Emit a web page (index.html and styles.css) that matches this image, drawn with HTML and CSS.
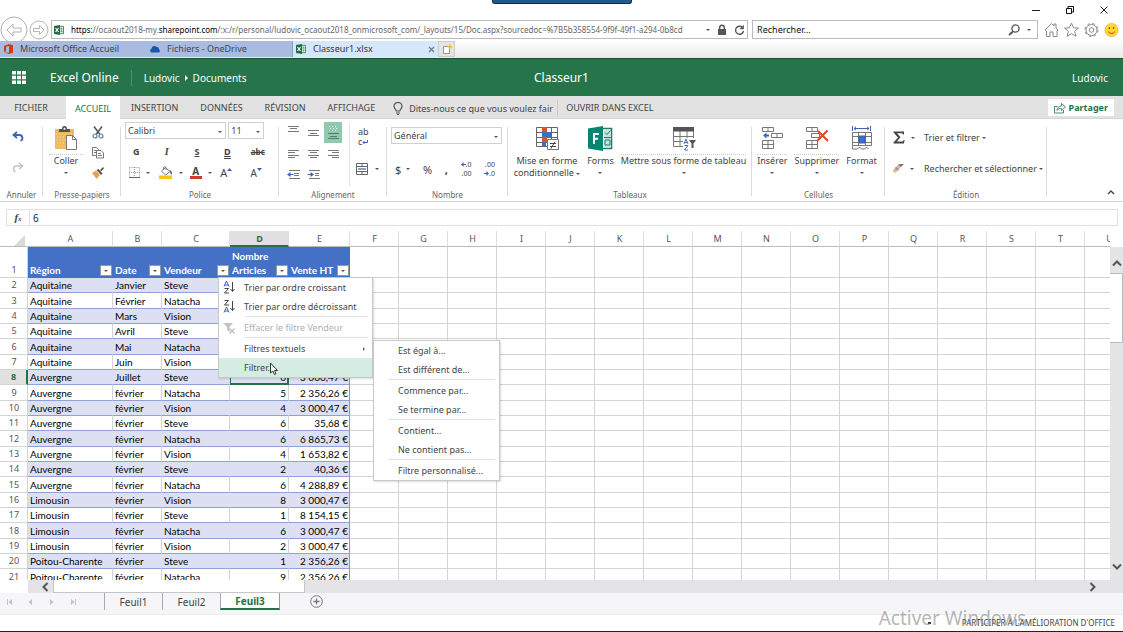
FILE: index.html
```html
<!DOCTYPE html>
<html lang="fr">
<head>
<meta charset="utf-8">
<title>Classeur1.xlsx</title>
<meta name="viewport" content="width=device-width, initial-scale=1">
<link rel="stylesheet" href="styles.css">
</head>
<body>
<svg class="defs" aria-hidden="true">
  <symbol id="xl" viewBox="0 0 10 10"><path fill="#fff" stroke="#217346" stroke-width=".8" d="M5 1.3h4.5v7.4H5z"/><path stroke="#217346" d="M6.5 3.2h2M6.5 5h2M6.5 6.8h2"/><path fill="#1e6f43" d="M0 1l6-1v10L0 9z"/><path stroke="#fff" stroke-width="1.1" d="M1.5 3l3 4M4.5 3l-3 4"/></symbol>
</svg>

<header class="browser">
  <div class="titlebar">
    <span class="session-bar"></span>
    <div class="win-buttons">
      <button aria-label="Réduire"><svg width="10" height="10"><path stroke="#222" d="M1 5.5h8"/></svg></button>
      <button aria-label="Restaurer"><svg width="10" height="10" fill="none" stroke="#111"><path d="M1.500 3.500h5v5h-5z"/><path d="M3 3.500v-2h5.500v5.500h-2"/></svg></button>
      <button aria-label="Fermer"><svg width="10" height="10"><path stroke="#222" d="M1.500 1.500l7 7M8.500 1.500l-7 7"/></svg></button>
    </div>
  </div>
  <div class="address-row">
    <button class="nav-btn" aria-label="Précédent"><svg width="28" height="28" fill="none" stroke="#b0b0b0"><circle cx="14" cy="14" r="13"/><path d="M7 14l6-6v4h8v4h-8v4z"/></svg></button>
    <button class="nav-btn" aria-label="Suivant"><svg width="20" height="20" fill="none" stroke="#b5b5b5"><circle cx="10" cy="10" r="9"/><path d="M15 10l-4.500-4.500v3h-6v3h6v3z"/></svg></button>
    <div class="url-box">
      <svg width="10" height="10"><use href="#xl"/></svg>
      <a class="url" href="#"><b>https:</b>//ocaout2018-my.<b>sharepoint.com</b>/:x:/r/personal/ludovic_ocaout2018_onmicrosoft_com/_layouts/15/Doc.aspx?sourcedoc=%7B5b358554-9f9f-49f1-a294-0b8cd</a>
      <i class="caret"></i>
      <svg width="10" height="12"><path fill="#555" d="M1 5h8v6H1z"/><path fill="none" stroke="#555" stroke-width="1.400" d="M2.700 5.500V3.500a2.300 2.300 0 0 1 4.600 0v2"/></svg>
      <button aria-label="Actualiser"><svg width="11" height="12" fill="none" stroke="#555" stroke-width="1.400"><path d="M8.500 3.500A4 4 0 1 0 9.500 7"/><path fill="#555" stroke="none" d="M9.800.8v4.400H5.500z"/></svg></button>
    </div>
    <div class="search-box">
      <input type="text" aria-label="Rechercher" value="Rechercher...">
      <svg width="13" height="12" fill="none" stroke="#555" stroke-width="1.300"><circle cx="7.500" cy="4.500" r="3.600"/><path stroke-width="1.800" d="M5 7.500L1 11"/></svg>
      <i class="caret"></i>
    </div>
    <div class="tools">
      <button aria-label="Accueil"><svg width="15" height="16" fill="none" stroke="#8a8a8a"><path d="M1 8l6.500-6.500 2.500 2.500V2h2v4l2 2-1 1v5.500H9V10H6v4.500H2.500V9z"/></svg></button>
      <button aria-label="Favoris"><svg width="15" height="16" fill="none" stroke="#8a8a8a"><path d="M7.500 1l2 4.800 5 .3-3.900 3.200 1.300 5-4.400-2.800-4.400 2.800 1.300-5L.5 6.100l5-.3z"/></svg></button>
      <button aria-label="Outils"><svg width="15" height="16" fill="none" stroke="#8a8a8a"><circle cx="7.500" cy="8" r="2.300"/><circle cx="7.500" cy="8" r="5.500"/><circle cx="7.500" cy="8" r="6.500" stroke-dasharray="2.600 2.500"/></svg></button>
      <button aria-label="Commentaires"><svg width="15" height="16"><circle cx="7.500" cy="8" r="6.600" fill="#ffd83a" stroke="#e5b62c" stroke-width=".7"/><path stroke="#c0392b" stroke-width="1.200" d="M5.400 5v2M9.600 5v2"/><path fill="none" stroke="#c0392b" d="M4 9.500q3.500 4 7 0"/></svg></button>
    </div>
  </div>
  <nav class="browser-tabs">
    <a class="btab" href="#"><svg width="9" height="10"><path fill="#d83b01" d="M0 2l5-2 4 1.200v7.600L5 10 0 8.200l5 .5V2L2 2.700v4.500L0 8z"/></svg>Microsoft Office Accueil</a>
    <a class="btab" href="#"><svg width="11" height="8"><path fill="#1758a8" d="M2.500 7.500a2 2 0 0 1 0-3.800A3 3 0 0 1 7.800 2 2.300 2.300 0 0 1 10 4.500a1.600 1.600 0 0 1-.3 3z"/></svg>Fichiers - OneDrive</a>
    <a class="btab current" href="#"><svg width="10" height="10"><use href="#xl"/></svg>Classeur1.xlsx<svg class="close" width="7" height="7"><path stroke="#777" stroke-width="1.200" d="M1 1l5 5M6 1L1 6"/></svg></a>
    <button class="new-tab" aria-label="Nouvel onglet"><svg width="10" height="11"><path fill="#fff" stroke="#999" d="M1.500 2.500h6v7h-6z"/><path fill="#f3b73a" d="M5.500 2h1.500V.5h1.400V2H10v1.500H8.400V5H7V3.500H5.500z"/></svg></button>
  </nav>
</header>

<div class="suite">
  <button class="waffle" aria-label="Applications"><svg width="14" height="13" fill="#fff"><path d="M0 0h4v3.500H0zM5 0h4v3.500H5zM10 0h4v3.500h-4zM0 4.700h4v3.500H0zM5 4.700h4v3.500H5zM10 4.700h4v3.500h-4zM0 9.400h4v3.500H0zM5 9.400h4v3.500H5zM10 9.400h4v3.500h-4z"/></svg></button>
  <span class="brand">Excel Online</span>
  <nav class="crumbs"><a href="#">Ludovic</a><i></i><a href="#">Documents</a></nav>
  <h1>Classeur1</h1>
  <span class="user">Ludovic</span>
</div>

<nav class="ribbon-tabs">
  <button class="file">FICHIER</button>
  <button class="current">ACCUEIL</button>
  <button>INSERTION</button>
  <button>DONNÉES</button>
  <button>RÉVISION</button>
  <button>AFFICHAGE</button>
  <label class="tell"><svg width="10" height="13" fill="none" stroke="#555" stroke-width="1.200"><path d="M3.200 9C3 7 1 6.500 1 4.300a4 4 0 0 1 8 0C9 6.500 7 7 6.800 9z"/><path d="M3 11h4M4 12.500h2"/></svg><input type="text" aria-label="Recherche de commande" value="Dites-nous ce que vous voulez fair"></label>
  <button class="open-in">OUVRIR DANS EXCEL</button>
  <button class="share"><svg width="12" height="12" fill="none" stroke="#4d8a68"><path d="M3.500 4.500h-3v6.500h9V8"/><path d="M3 8.500c.2-3 2-4.500 4.500-4.500V1.500l4 3.500-4 3.500V6.300C5.500 6.300 4 7 3 8.500z"/></svg>Partager</button>
</nav>

<section class="ribbon">
  <div class="group g-undo">
    <div class="body">
      <button aria-label="Annuler"><svg width="12" height="11" fill="none" stroke="#3c64b0" stroke-width="1.800"><path d="M1.500 4h6a3 3 0 0 1 1 5.800"/><path d="M5 .8L1.500 4 5 7.200"/></svg></button>
      <button aria-label="Rétablir"><svg width="12" height="11" fill="none" stroke="#c4c4c4" stroke-width="1.400"><path d="M10.500 4h-6a3 3 0 0 0-1 5.800"/><path d="M7 .8L10.500 4 7 7.200"/></svg></button>
    </div>
    <h2>Annuler</h2>
  </div>

  <div class="group g-clip">
    <div class="body">
      <button class="big lined"><svg width="24" height="25"><path fill="#edb95c" d="M1 3h19v20H1z"/><path stroke="#fff" stroke-width=".6" stroke-dasharray="1 2" d="M2 8h17M3 11h16M2 14h17M3 17h16M2 20h17"/><path fill="#555" d="M5 6V3h3q0-3 2.500-3T13 3h3v3z"/><circle cx="10.500" cy="2.800" r="1" fill="#fff"/><path fill="#fff" stroke="#777" d="M12.500 9.500h6l4 4v10h-10z"/><path fill="none" stroke="#777" d="M18.500 9.500v4h4"/></svg><span>Coller</span><i class="caret"></i></button>
      <div class="stack">
        <button aria-label="Couper"><svg width="12" height="13" fill="none" stroke="#555" stroke-width="1.500"><path d="M2 .5l6 8M10 .5l-6 8"/><circle cx="3" cy="10" r="2" stroke="#5c7fb8" stroke-width="1.200"/><circle cx="9" cy="10" r="2" stroke="#5c7fb8" stroke-width="1.200"/></svg></button>
        <button aria-label="Copier"><svg width="12" height="12" fill="#fff" stroke="#777"><path d="M.5.500h4l2 2v6h-6z"/><path d="M4.500 3.500h4.500l2.500 2.500v5h-7z"/><path d="M2 3.500h2M2 5.500h2M6 6.500h3M6 8.500h4"/></svg></button>
        <button aria-label="Reproduire la mise en forme"><svg width="12" height="12"><path fill="#e5a34e" d="M0 6l4-2.500L8 8l-3.500 4z"/><path fill="#555" d="M4.500 3l2-1 4 4.500-1.500 1.500zM8 3l3-3 1 1.200-2.500 3z"/></svg></button>
      </div>
    </div>
    <h2>Presse-papiers</h2>
  </div>

  <div class="group g-font">
    <div class="body">
      <div class="selects">
        <span class="sel name"><select aria-label="Police"><option>Calibri</option></select></span>
        <span class="sel size"><select aria-label="Taille"><option>11</option></select></span>
      </div>
      <div class="five">
        <button class="b">G</button><button class="i">I</button><button class="u">S</button><button class="d">D</button><button class="s">abc</button>
      </div>
      <div class="five">
        <button aria-label="Bordures"><svg width="11" height="11" fill="none" stroke="#999"><path stroke-dasharray="1 1" d="M.5.5h10v10M.5.5v10M5.500 0v11M0 5.500h11"/><path stroke="#666" d="M0 10.500h11"/></svg><i class="caret"></i></button>
        <button aria-label="Remplissage"><svg width="14" height="13"><path fill="#f5c518" d="M0 9.500h13V13H0z"/><path fill="#fff" stroke="#777" d="M2.500 5l4-3.500L11 5.500 6.500 9z"/><path fill="none" stroke="#777" d="M4.500 4V1.500q1.500-2 2.500 0V4"/><path fill="#3c64b0" d="M11 4q3 2 1.500 5-1.500-1-1.500-5z"/></svg><i class="caret"></i></button>
        <button aria-label="Couleur de police"><span class="fcolor">A</span><i class="caret"></i></button>
        <button aria-label="Agrandir la police" class="grow">A<svg width="5" height="10"><path fill="#3c64b0" d="M0 3l2.500-3L5 3z"/></svg></button>
        <button aria-label="Réduire la police" class="grow small">A<svg width="5" height="10"><path fill="#3c64b0" d="M0 0h5L2.500 3z"/></svg></button>
      </div>
    </div>
    <h2>Police</h2>
  </div>

  <div class="group g-align">
    <div class="body">
      <div class="nine">
        <button aria-label="Haut"><svg width="11" height="14"><path stroke="#777" d="M0 .5h11M2 2.500h7M0 5.500h11"/></svg></button>
        <button aria-label="Milieu"><svg width="11" height="14"><path stroke="#777" d="M0 4.500h11M2 7.500h7M0 9.500h11"/></svg></button>
        <button aria-label="Bas" class="on"><svg width="11" height="16"><path stroke="#e9f6ef" stroke-dasharray="1 2" d="M1 1.500h9M2 3.500h9M1 5.500h9"/><path stroke="#4d7d69" d="M0 8.500h11M2 11.500h7M0 13.500h11"/></svg></button>
        <button aria-label="Gauche"><svg width="11" height="10"><path stroke="#777" d="M0 1.500h11M0 3.500h7M0 6.500h11M0 8.500h7"/></svg></button>
        <button aria-label="Centrer"><svg width="11" height="10"><path stroke="#777" d="M0 1.500h11M2 3.500h7M0 6.500h11M2 8.500h7"/></svg></button>
        <button aria-label="Droite"><svg width="11" height="10"><path stroke="#777" d="M0 1.500h11M4 3.500h7M0 6.500h11M4 8.500h7"/></svg></button>
        <button aria-label="Diminuer le retrait"><svg width="13" height="10"><path stroke="#777" d="M2 .5h11M7 3.500h5M7 5.500h5M2 8.500h11"/><path fill="#3c64b0" d="M0 4.500L3.500 2v2h3v1h-3v2z"/></svg></button>
        <button aria-label="Augmenter le retrait"><svg width="13" height="10"><path stroke="#777" d="M2 .5h11M8 3.500h4M8 5.500h4M2 8.500h11"/><path fill="#3c64b0" d="M7 4.500L3.500 2v2h-3v1h3v2z"/></svg></button>
      </div>
      <div class="wrapcol">
        <button aria-label="Renvoyer à la ligne" class="wrap"><span>ab</span><span>c<svg width="6" height="5"><path fill="none" stroke="#3c64b0" d="M5.500 0v2.500H1M2.500 1L1 2.500 2.500 4"/></svg></span></button>
        <button class="merge" aria-label="Fusionner"><svg width="12" height="12" fill="none" stroke="#666"><path d="M.5.5h11v11H.5zM0 3.500h12M0 8.500h12M6 0v3M6 9v3"/><path stroke="#3c64b0" stroke-width="1.200" d="M2 6h8"/></svg><i class="caret"></i></button>
      </div>
    </div>
    <h2>Alignement</h2>
  </div>

  <div class="group g-num">
    <div class="body">
      <span class="sel"><select aria-label="Format de nombre"><option>Général</option></select></span>
      <div class="numrow">
        <button aria-label="Monétaire">$<i class="caret"></i></button><button>%</button><button class="comma">,</button>
        <button class="dec" aria-label="Ajouter une décimale"><span><svg width="5" height="5"><path fill="#3c64b0" d="M0 2.500L2.500 0v2H5v1H2.500v2z"/></svg>.0</span><span>.00</span></button>
        <button class="dec" aria-label="Réduire les décimales"><span>.00</span><span><svg width="5" height="5"><path fill="#3c64b0" d="M5 2.500L2.500 0v2H0v1h2.500v2z"/></svg>.0</span></button>
      </div>
    </div>
    <h2>Nombre</h2>
  </div>

  <div class="group g-tables">
    <div class="body">
      <button class="big"><svg width="24" height="25"><path fill="#fff" stroke="#666" d="M1.500 1.500h21v19h-21zM1 6.500h22M1 11.500h22M1 16.500h22M7.500 1v20M16.500 1v20"/><path fill="#d9532c" d="M7 1h5v5H7zM7 11h5v5H7z"/><path fill="#3f6fc0" d="M7 6h9v5H7zM7 16h4v4H7z"/><path fill="#fff" stroke="#777" d="M12.500 13.500h11v10h-11z"/><path stroke="#444" d="M15 17.500h6M15 20.500h6M20 15.500l-4 7"/></svg><span>Mise en forme<br>conditionnelle <i class="caret"></i></span></button>
      <button class="big"><svg width="25" height="25"><path fill="#fff" stroke="#1a7f6c" stroke-width="1.600" d="M12 2.500h11.500v20H12z"/><path fill="#c7e3dc" d="M16 4h7v17h-7z"/><path fill="none" stroke="#1a7f6c" d="M17 6.500l2 2 3.500-4M16 11.500h7M17 14h5v5h-5z"/><path fill="#078571" d="M0 2.500L15 0v25L0 22.500z"/><path fill="none" stroke="#fff" stroke-width="2" d="M6 18V8h5M6 12.800h4"/></svg><span>Forms</span><i class="caret"></i></button>
      <button class="big lined"><svg width="24" height="25"><path fill="#fff" stroke="#777" d="M1.500 1.500h20v19h-20zM1 10.500h21M1 15.500h21M8 5v16M15 5v16"/><path fill="#555" d="M1 1h21v4.500H1z"/><path fill="#fff" d="M11 12h12v13H11z"/><path fill="none" stroke="#4a6fb5" d="M12 18l2-5 2 5M12.500 16.500h3M12.500 19.500H16l-3.500 4.500H16"/><path fill="#555" d="M17 14h7l-2.500 3.500V22h-2v-4.500z"/></svg><span>Mettre sous forme de tableau</span><i class="caret"></i></button>
    </div>
    <h2>Tableaux</h2>
  </div>

  <div class="group g-cells">
    <div class="body">
      <button class="big lined"><svg width="22" height="25" fill="#fff" stroke="#777"><path d="M1.500 1.500h11v4h-11zM7 1v4M10.500 7.500h11v4h-11zM16 7v5M1.500 14.500h11v8h-11zM7 14v9M1 18.500h12"/><path fill="#3c64b0" stroke="none" d="M2 9.500L5.500 6.500v2H8v2H5.500v2z"/></svg><span>Insérer</span><i class="caret"></i></button>
      <button class="big lined"><svg width="24" height="25" fill="#fff" stroke="#777"><path d="M1.500 1.500h11v4h-11zM7 1v4M6.500 7.500h8v4h-8zM1.500 14.500h11v8h-11zM7 14v9M1 18.500h12"/><path stroke="#dc4a26" stroke-width="2" d="M13 5l10 10M22.500 4.500L12 15"/></svg><span>Supprimer</span><i class="caret"></i></button>
      <button class="big"><svg width="24" height="25" fill="#fff" stroke="#777"><path d="M2.500 6.500h19v13h-19zM2 10.500h20M2 16.500h20M8.500 6v14M15.500 6v14M2.500 20v3h5l2-2 2 2h3l2-2 2 2"/><path fill="#3f6fc0" stroke="#2f5fae" d="M9 10h6v7H9z"/><path fill="none" stroke="#3c64b0" d="M2.500 0v5M20.500 0v5M4 2.500h15M6 .8L4 2.500 6 4.200M17 .8l2 1.700-2 1.700"/></svg><span>Format</span><i class="caret"></i></button>
    </div>
    <h2>Cellules</h2>
  </div>

  <div class="group g-edit">
    <div class="body">
      <button aria-label="Somme"><svg width="12" height="13"><path fill="#444" d="M.5.500h10.500V3.500h-1q-.3-1.300-1.500-1.300H4L7.500 6.200 3.800 10.500H9q1.300 0 1.600-1.500h1L11 12.500H.5v-1L5 6.500.5 1.500z"/></svg><i class="caret"></i></button>
      <button>Trier et filtrer<i class="caret"></i></button>
      <button aria-label="Effacer"><svg width="11" height="9"><path fill="#e9b48a" d="M0 6l5-5 3 2-5 5.500H1z"/><path fill="#777" d="M5 1l1.500-1H11L8 3z"/><path fill="#6f8cc2" d="M3 3l3 2.500-1 1L2 4z"/></svg><i class="caret"></i></button>
      <button>Rechercher et sélectionner<i class="caret"></i></button>
    </div>
    <h2>Édition</h2>
  </div>
  <button class="collapse" aria-label="Réduire le ruban"><svg width="8" height="6"><path fill="none" stroke="#444" stroke-width="1.400" d="M1 5l3-3 3 3"/></svg></button>
</section>

<div class="formula">
  <span class="fx">f<sub>x</sub></span>
  <input type="text" aria-label="Barre de formule" value="6">
</div>

<main class="sheet">
  <div class="viewport">
    <table class="cells" id="cells"></table>
    <div class="menu filter-menu" role="menu">
      <button role="menuitem"><svg width="12" height="13"><path fill="none" stroke="#3c5fa8" d="M1 5.500L3.500 0 6 5.500M2 4h3"/><path fill="none" stroke="#444" d="M1.500 7.500h4l-4 4.500h4.500M9.500 1v9M7.500 8l2 2.500 2-2.500"/></svg>Trier par ordre croissant</button>
      <button role="menuitem"><svg width="12" height="13"><path fill="none" stroke="#444" d="M1.500.5h4l-4 4.500h4.500M9.500 1v9M7.500 8l2 2.500 2-2.500"/><path fill="none" stroke="#3c5fa8" d="M1 12.500L3.500 7 6 12.500M2 11h3"/></svg>Trier par ordre décroissant</button>
      <hr>
      <button role="menuitem" disabled><svg width="12" height="12"><path fill="#c4c4c4" d="M0 1h10L6.500 5v5L4 8V5z"/><path stroke="#bbb" stroke-width="1.200" d="M6.500 6.500l5 5M11.500 6.500l-5 5"/></svg>Effacer le filtre Vendeur</button>
      <hr>
      <button role="menuitem"><span class="nosvg"></span>Filtres textuels<i class="arrow"></i></button>
      <button role="menuitem" class="hover"><span class="nosvg"></span>Filtrer...</button>
    </div>
    <div class="menu sub-menu" role="menu">
      <button role="menuitem">Est égal à...</button>
      <button role="menuitem">Est différent de...</button>
      <hr>
      <button role="menuitem">Commence par...</button>
      <button role="menuitem">Se termine par...</button>
      <hr>
      <button role="menuitem">Contient...</button>
      <button role="menuitem">Ne contient pas...</button>
      <hr>
      <button role="menuitem">Filtre personnalisé...</button>
    </div>
    <svg class="pointer" width="10" height="14"><path fill="#fff" stroke="#333" d="M1.500 1v10l2.300-2 1.700 3.500 1.500-.8L5.500 8.500h3z"/></svg>
  </div>
  <div class="vscroll">
    <button aria-label="Haut"><svg width="10" height="8"><path fill="none" stroke="#555" stroke-width="2" d="M1 6.500l4-4 4 4"/></svg></button>
    <div class="thumb"></div>
    <button class="down" aria-label="Bas"><svg width="10" height="8"><path fill="none" stroke="#555" stroke-width="2" d="M1 1.500l4 4 4-4"/></svg></button>
  </div>
</main>
<div class="hscroll">
  <button aria-label="Gauche"><svg width="8" height="10"><path fill="none" stroke="#555" stroke-width="2" d="M6.500 1l-4 4 4 4"/></svg></button>
  <div class="thumb"></div>
  <button class="right" aria-label="Droite"><svg width="8" height="10"><path fill="none" stroke="#555" stroke-width="2" d="M1.500 1l4 4-4 4"/></svg></button>
</div>

<nav class="sheet-tabs">
  <div class="movers">
    <button aria-label="Première"><svg width="6" height="6" fill="#c3c3c8"><path d="M0 0h1v6H0zM5 0v6L1.500 3z"/></svg></button>
    <button aria-label="Précédente"><svg width="6" height="6" fill="#c3c3c8"><path d="M4 0v6L.5 3z"/></svg></button>
    <button aria-label="Suivante"><svg width="6" height="6" fill="#c3c3c8"><path d="M1 0v6l3.500-3z"/></svg></button>
    <button aria-label="Dernière"><svg width="6" height="6" fill="#c3c3c8"><path d="M5 0h1v6H5zM1 0v6l3.500-3z"/></svg></button>
  </div>
  <button class="stab">Feuil1</button>
  <button class="stab">Feuil2</button>
  <button class="stab current">Feuil3</button>
  <button class="add" aria-label="Nouvelle feuille"><svg width="13" height="13" fill="none" stroke="#777"><circle cx="6.500" cy="6.500" r="5.800"/><path stroke-width="1.300" d="M3.500 6.500h6M6.500 3.500v6"/></svg></button>
</nav>
<footer class="status">
  <i class="tick"></i>
  <a href="#">PARTICIPER À L'AMÉLIORATION D'OFFICE</a>
  <span class="watermark">Activer Windows</span>
</footer>
<script src="script.js"></script>
</body>
</html>
```
FILE: styles.css
```css
* { box-sizing: border-box; }
:root {
  --ui: "Noto Sans", "Open Sans", sans-serif;
  --green: #217346;
  --ink: #444;
}
body {
  margin: 0;
  height: 100vh;
  display: flex;
  flex-direction: column;
  overflow: hidden;
  font: 9px/12px var(--ui);
  color: var(--ink);
  background: #fff;
  border-bottom: 1px solid #222;
}
button, input, select {
  font: inherit;
  color: inherit;
  background: none;
  border: 0;
  padding: 0;
  margin: 0;
  outline: 0;
}
button { display: inline-flex; align-items: center; justify-content: center; white-space: nowrap; }
a { color: inherit; text-decoration: none; }
svg { display: block; flex: none; }
.defs { position: absolute; width: 0; height: 0; }
.caret {
  display: inline-block;
  flex: none;
  border: 2px solid transparent;
  border-top-color: #555;
  border-bottom: 0;
}

/* browser chrome */
.titlebar { height: 19px; display: flex; justify-content: center; }
.session-bar {
  width: 140px;
  height: 4px;
  background: #1c5c8e;
  border: 1px solid #1b2a36;
  border-top: 0;
  border-radius: 0 0 3px 3px;
}
.win-buttons { position: absolute; right: 14px; top: 5px; display: flex; gap: 24px; }
.address-row { display: flex; align-items: center; height: 21px; padding: 0 4px 0 0; }
.nav-btn { margin-right: 1px; }
.url-box, .search-box {
  display: flex;
  align-items: center;
  height: 19px;
  border: 1px solid #bbb;
  background: #fff;
}
.url-box { flex: 704; min-width: 0; margin-left: 1px; padding: 0 2px; gap: 7px; }
.url { flex: 1; min-width: 0; overflow: hidden; white-space: nowrap; font-size: 8px; color: #666; }
.url b { font-weight: 400; color: #000; }
.search-box { flex: 279; margin-left: 4px; padding: 0 6px 0 4px; gap: 6px; }
.search-box input { flex: 1; min-width: 0; color: #111; }
.tools { display: flex; gap: 5px; margin-left: 6px; }
.browser-tabs {
  display: flex;
  height: 18px;
  padding-bottom: 1px;
  background: linear-gradient(#fff, #eaeaea);
}
.btab {
  display: flex;
  align-items: center;
  gap: 7px;
  width: 146px;
  margin-top: 1px;
  padding-left: 4px;
  background: #a9bbde;
  color: #3d4657;
}
.btab + .btab { padding-left: 3px; }
.btab.current { background: #d7e7fb; border-left: 1px solid #8aa0c0; color: #333; }
.btab .close { margin: 0 3px 0 auto; }
.new-tab { width: 17px; margin-top: 1px; background: #e4e4e4; border: 1px solid #ccc; }

/* suite header */
.suite {
  position: relative;
  display: flex;
  align-items: center;
  height: 38px;
  padding: 0 15px 0 12px;
  background: #25744a;
  border-top: 1px solid #14562f;
  color: #fff;
}
.brand { margin-left: 24px; padding-right: 12px; font-size: 12px; line-height: 16px; border-right: 1px solid #4c8f6b; }
.crumbs { display: flex; align-items: center; gap: 5px; margin-left: 12px; font-size: 10px; }
.crumbs i { border: 3px solid transparent; border-left-color: #fff; border-right: 0; }
.suite h1 { position: absolute; left: 0; right: 0; margin: 0; text-align: center; font: 400 12px/16px var(--ui); }
.user { margin-left: auto; font-size: 10px; }

/* ribbon tabs */
.ribbon-tabs { display: flex; align-items: stretch; height: 23px; background: #e2e2e2; border-bottom: 1px solid #d4d4d4; }
.ribbon-tabs > button { padding: 2px 11px 0; }
.ribbon-tabs .file { width: 66px; padding: 2px 4px 0 0; }
.ribbon-tabs .current { width: 54px; padding: 2px 0 0; margin-bottom: -1px; background: #fff; color: var(--green); }
.tell { display: flex; align-items: center; gap: 6px; margin-left: 7px; padding-top: 2px; }
.tell input { width: 149px; height: 16px; border-right: 1px solid #ccc; }
.ribbon-tabs .open-in { padding: 2px 8px 0; }
.ribbon-tabs .share {
  gap: 3px;
  margin: 3px 9px 2px auto;
  padding: 0 6px;
  background: #fff;
  color: var(--green);
  font-weight: 700;
}

/* ribbon */
.ribbon { display: flex; height: 83px; border-bottom: 1px solid #d4d4d4; }
.group { position: relative; flex: none; display: flex; flex-direction: column; }
.group::after {
  content: "";
  position: absolute;
  right: 0;
  top: 8px;
  bottom: 5px;
  border-right: 1px solid #dcdcdc;
}
.group h2 { margin: 0; text-align: center; font: 400 8px/12px var(--ui); color: #666; }
.group .body { height: 70px; display: flex; }
.big { flex-direction: column; justify-content: flex-start; line-height: 12px; }
.big svg { margin: 7px 0 3px; }
.big > span { border-top: 1px solid transparent; }
.big > .caret { margin-top: 5px; }
.big .caret { vertical-align: middle; }
.big.lined > span { border-top: 1px dotted #ccc; }
.sel { position: relative; display: block; border: 1px solid #d0d0d0; }
.sel::after {
  content: "";
  position: absolute;
  right: 3px;
  top: 50%;
  border: 2px solid transparent;
  border-top-color: #555;
  border-bottom: 0;
}
.sel select { display: block; width: 100%; height: 15px; padding: 0 2px; appearance: none; }

.g-undo { width: 43px; }
.g-undo .body { flex-direction: column; align-items: center; padding: 12px 8px 0 0; gap: 20px; }
.g-clip { width: 78px; }
.g-clip .body { padding-left: 6px; }
.g-clip .big { width: 34px; }
.g-clip .big span { width: 100%; }
.stack { display: flex; flex-direction: column; align-items: center; gap: 8px; width: 30px; padding-top: 7px; }
.g-font { width: 158px; }
.g-font .body { flex-direction: column; padding: 3px 5px 0 4px; }
.selects { display: flex; gap: 2px; padding-right: 10px; }
.sel.name { flex: 103; }
.sel.size { flex: 35; }
.five { display: grid; grid-template-columns: repeat(5, 1fr); height: 21px; margin-right: -3px; padding-top: 4px; }
.five + .five { padding-top: 4px; }
.five + .five button { justify-content: flex-start; padding-left: 4px; }
.five + .five .caret { margin-left: 6px; }
.five .b, .five .i, .five .u, .five .d, .five .s { font-weight: 700; padding-right: 8px; }
.five .i { font-family: "Liberation Serif", serif; font-style: italic; font-size: 10px; }
.five .u { text-decoration: underline; }
.five .d { text-decoration: underline double; }
.five .s { font-size: 8px; text-decoration: line-through; }
.fcolor { width: 12px; text-align: center; line-height: 10px; font-size: 10px; font-weight: 700; border-bottom: 3px solid #d13b2e; }
.grow { font-size: 11px; }
.grow.small { font-size: 10px; }
.g-align { width: 108px; }
.nine { display: grid; grid-template: 21px 21px 21px / repeat(3, 20px); width: 64px; margin: 3px 0 0 4px; align-content: start; }
.nine .on { margin: 0 1px; background: #8fc9ae; }
.wrapcol {
  flex: 1;
  display: flex;
  flex-direction: column;
  justify-content: space-between;
  align-items: flex-start;
  margin: 4px 0 2px 2px;
  padding: 4px 0 12px 6px;
  border-left: 1px solid #e4e4e4;
}
.wrap { flex-direction: column; align-items: flex-start; line-height: 10px; margin-left: 2px; }
.wrap span { display: flex; align-items: center; }
.wrapcol .caret { margin-left: 7px; }
.g-num { width: 121px; }
.g-num .body { flex-direction: column; padding: 8px 6px 0 4px; }
.numrow { display: flex; align-items: center; justify-content: space-between; margin-top: 16px; padding: 0 7px 0 4px; font-size: 11px; line-height: 15px; }
.numrow .caret { margin-left: 5px; }
.comma { font-weight: 700; }
.dec { flex-direction: column; align-items: flex-end; font-size: 7px; line-height: 9px; }
.dec span { display: flex; align-items: center; }
.g-tables { width: 244px; }
.g-tables .body { justify-content: center; gap: 7px; }
.g-cells { width: 133px; }
.g-cells .body { justify-content: center; gap: 7px; padding-right: 3px; }
.g-edit { width: 162px; }
.g-edit .body { display: grid; grid-template: 31px 31px / 31px auto; padding: 3px 0 0 8px; justify-items: start; align-content: start; }
.g-edit .caret { margin-left: 2px; }
.g-edit svg + .caret { margin-left: 6px; }
.collapse { margin: auto 8px 6px auto; }

/* formula bar */
.formula { display: flex; margin: 7px 5px 5px 6px; height: 17px; border: 1px solid #e0e0e0; }
.fx { width: 23px; border-right: 1px solid #e0e0e0; text-align: center; font: italic 700 11px/15px "Liberation Serif", serif; }
.fx sub { font-size: 7px; line-height: 1; vertical-align: baseline; }
.formula input { flex: 1; padding-left: 3px; font-size: 10px; color: #222; }

/* sheet */
.sheet { flex: 1; display: flex; min-height: 0; }
.viewport { position: relative; flex: 1; min-width: 0; overflow: hidden; }
.cells {
  width: 1134px;
  table-layout: fixed;
  border-collapse: separate;
  border-spacing: 0;
  font: 10px/13px Lato, sans-serif;
  color: #000;
}
.cells td, .cells th {
  height: 15px;
  padding: 0 1px 0 2px;
  overflow: hidden;
  white-space: nowrap;
  font-weight: 400;
  text-align: left;
  border-right: 1px solid #d4d4d4;
  border-bottom: 1px solid #d4d4d4;
  line-height: 14px;
}
.cells tr:nth-child(3n) td, .cells tr:nth-child(3n) th { height: 16px; }
.cells thead th { height: 16px; text-align: center; font: 9px/14px var(--ui); color: #555; border-right-color: #ddd; border-bottom-color: #bbb; }
.cells thead th.sel-col { background: #e1e1e1; color: var(--green); font-weight: 700; line-height: 13px; border-bottom: 2px solid var(--green); }
.cells thead .corner { border-right-color: transparent; }
.corner svg { margin: 3px 1px 0 auto; }
.cells tbody th { text-align: center; font: 9px/14px var(--ui); color: #555; }
.cells tbody th.sel-row { background: #e1e1e1; color: var(--green); font-weight: 700; border-right: 2px solid var(--green); }
.cells tr.head td, .cells tr.head th { height: 31px; vertical-align: bottom; }
.cells tr.head td.t {
  background: #4470c6;
  color: #fff;
  font-weight: 700;
  border-right-color: #4470c6;
  border-bottom-color: #4470c6;
  white-space: pre-line;
  position: relative;
}
.filter {
  position: absolute;
  right: 0;
  bottom: 1px;
  width: 12px;
  height: 11px;
  background: #fff;
  border: 1px solid #999;
}
.cells .t { border-bottom-color: #8ea2d8; }
.cells .band .t { background: #dde0f3; border-right-color: #dde0f3; }
.cells .t.n { text-align: right; padding-right: 2px; }
.cells .t.n.last { padding-right: 1px; }
.cells td.t.last, .cells .band td.t.last { border-right-color: #7f97d4; }
.cells tr.band td.active { box-shadow: inset 0 0 0 1px var(--green); border-color: var(--green); }

/* menus */
.menu { position: absolute; display: flex; flex-direction: column; background: #fff; border: 1px solid #c8c8c8; box-shadow: 1px 1px 2px rgba(0, 0, 0, .15); }
.menu button { height: 19px; justify-content: flex-start; }
.menu hr { width: calc(100% - 30px); margin: 0 4px 1px auto; border: 0; border-top: 1px solid #e1e1e1; }
.menu button:disabled { color: #b0b0b0; }
.filter-menu { left: 218px; top: 46px; width: 155px; }
.filter-menu button { padding-left: 4px; gap: 9px; }
.nosvg { width: 12px; }
.menu .hover { background: #d5ece2; }
.arrow { margin: 0 7px 0 auto; border: 2px solid transparent; border-left-color: #666; border-right: 0; }
.sub-menu { left: 373px; top: 109px; width: 127px; }
.sub-menu button { padding-left: 24px; }
.sub-menu hr { width: calc(100% - 18px); }
.pointer { position: absolute; left: 269px; top: 131px; }

/* scrollbars */
.vscroll { width: 13px; display: flex; flex-direction: column; align-items: center; margin-top: 16px; background: #e4e3e5; }
.vscroll button { width: 100%; height: 26px; padding-top: 6px; }
.vscroll .thumb { width: 100%; height: 70px; background: #fff; border: 1px solid #bbb; border-left: 0; }
.vscroll .down { margin-top: auto; padding: 0; }
.hscroll { display: flex; height: 13px; margin-left: 28px; padding-right: 22px; background: #e4e3e5; }
.hscroll button { width: 16px; margin-left: 9px; }
.hscroll .thumb { width: 252px; background: #fff; border: 1px solid #c6c6c6; border-top: 0; }
.hscroll .right { margin-left: auto; }

/* sheet tabs and status */
.sheet-tabs { display: flex; height: 22px; padding-bottom: 4px; background: #f6f6f8; border-bottom: 1px solid #ececec; }
.movers { display: flex; gap: 15px; width: 104px; padding-left: 7px; }
.stab { width: 58px; border-left: 1px solid #aaa; font-size: 10px; }
.stab.current { width: 60px; background: #fff; border-right: 1px solid #999; border-bottom: 2px solid var(--green); color: var(--green); font-weight: 700; }
.add { margin-left: 30px; }
.status { position: relative; display: flex; align-items: center; justify-content: flex-end; height: 16px; padding-right: 8px; font-size: 8px; }
.tick { width: 3px; height: 2px; background: #333; margin-right: 31px; }
.watermark { position: absolute; right: 97px; bottom: 1px; font-size: 19px; line-height: 24px; color: rgba(120, 120, 120, .55); }
```
FILE: script.js
```js
const rows = [
  ["Aquitaine", "Janvier", "Steve", "", ""],
  ["Aquitaine", "Février", "Natacha", "", ""],
  ["Aquitaine", "Mars", "Vision", "", ""],
  ["Aquitaine", "Avril", "Steve", "", ""],
  ["Aquitaine", "Mai", "Natacha", "", ""],
  ["Aquitaine", "Juin", "Vision", "", ""],
  ["Auvergne", "Juillet", "Steve", "6", "3 000,47 €"],
  ["Auvergne", "février", "Natacha", "5", "2 356,26 €"],
  ["Auvergne", "février", "Vision", "4", "3 000,47 €"],
  ["Auvergne", "février", "Steve", "6", "35,68 €"],
  ["Auvergne", "février", "Natacha", "6", "6 865,73 €"],
  ["Auvergne", "février", "Vision", "4", "1 653,82 €"],
  ["Auvergne", "février", "Steve", "2", "40,36 €"],
  ["Auvergne", "février", "Natacha", "6", "4 288,89 €"],
  ["Limousin", "février", "Vision", "8", "3 000,47 €"],
  ["Limousin", "février", "Steve", "1", "8 154,15 €"],
  ["Limousin", "février", "Natacha", "6", "3 000,47 €"],
  ["Limousin", "février", "Vision", "2", "3 000,47 €"],
  ["Poitou-Charente", "février", "Steve", "1", "2 356,26 €"],
  ["Poitou-Charente", "février", "Natacha", "9", "2 356,26 €"]
];
const widths = [28, 85, 49, 68, 59, 61].concat(Array(16).fill(49));
const letters = "ABCDEFGHIJKLMNOPQRSTU".split("");
const blanks = "<td></td>".repeat(16);
const filter = '<button class="filter" aria-label="Filtrer"><i class="caret"></i></button>';

let html = "<colgroup>" + widths.map(w => `<col style="width:${w}px">`).join("") + "</colgroup>";
html += '<thead><tr><th class="corner"><svg width="11" height="11"><path fill="#d9d9d9" d="M11 0v11H0z"/></svg></th>' +
  letters.map(l => `<th${l === "D" ? ' class="sel-col"' : ""}>${l}</th>`).join("") + "</tr></thead><tbody>";
html += '<tr class="head"><th>1</th>' +
  ["Région", "Date", "Vendeur", "Nombre\nArticles", "Vente HT"].map(t => `<td class="t">${t}${filter}</td>`).join("") + blanks + "</tr>";
rows.forEach((r, i) => {
  const n = i + 2;
  html += `<tr class="${i % 2 ? "" : "band"}"><th${n === 8 ? ' class="sel-row"' : ""}>${n}</th>` +
    r.map((v, c) => `<td class="t${c > 2 ? " n" : ""}${c === 4 ? " last" : ""}${n === 8 && c === 3 ? " active" : ""}">${v}</td>`).join("") +
    blanks + "</tr>";
});
document.getElementById("cells").innerHTML = html + "</tbody>";
```
